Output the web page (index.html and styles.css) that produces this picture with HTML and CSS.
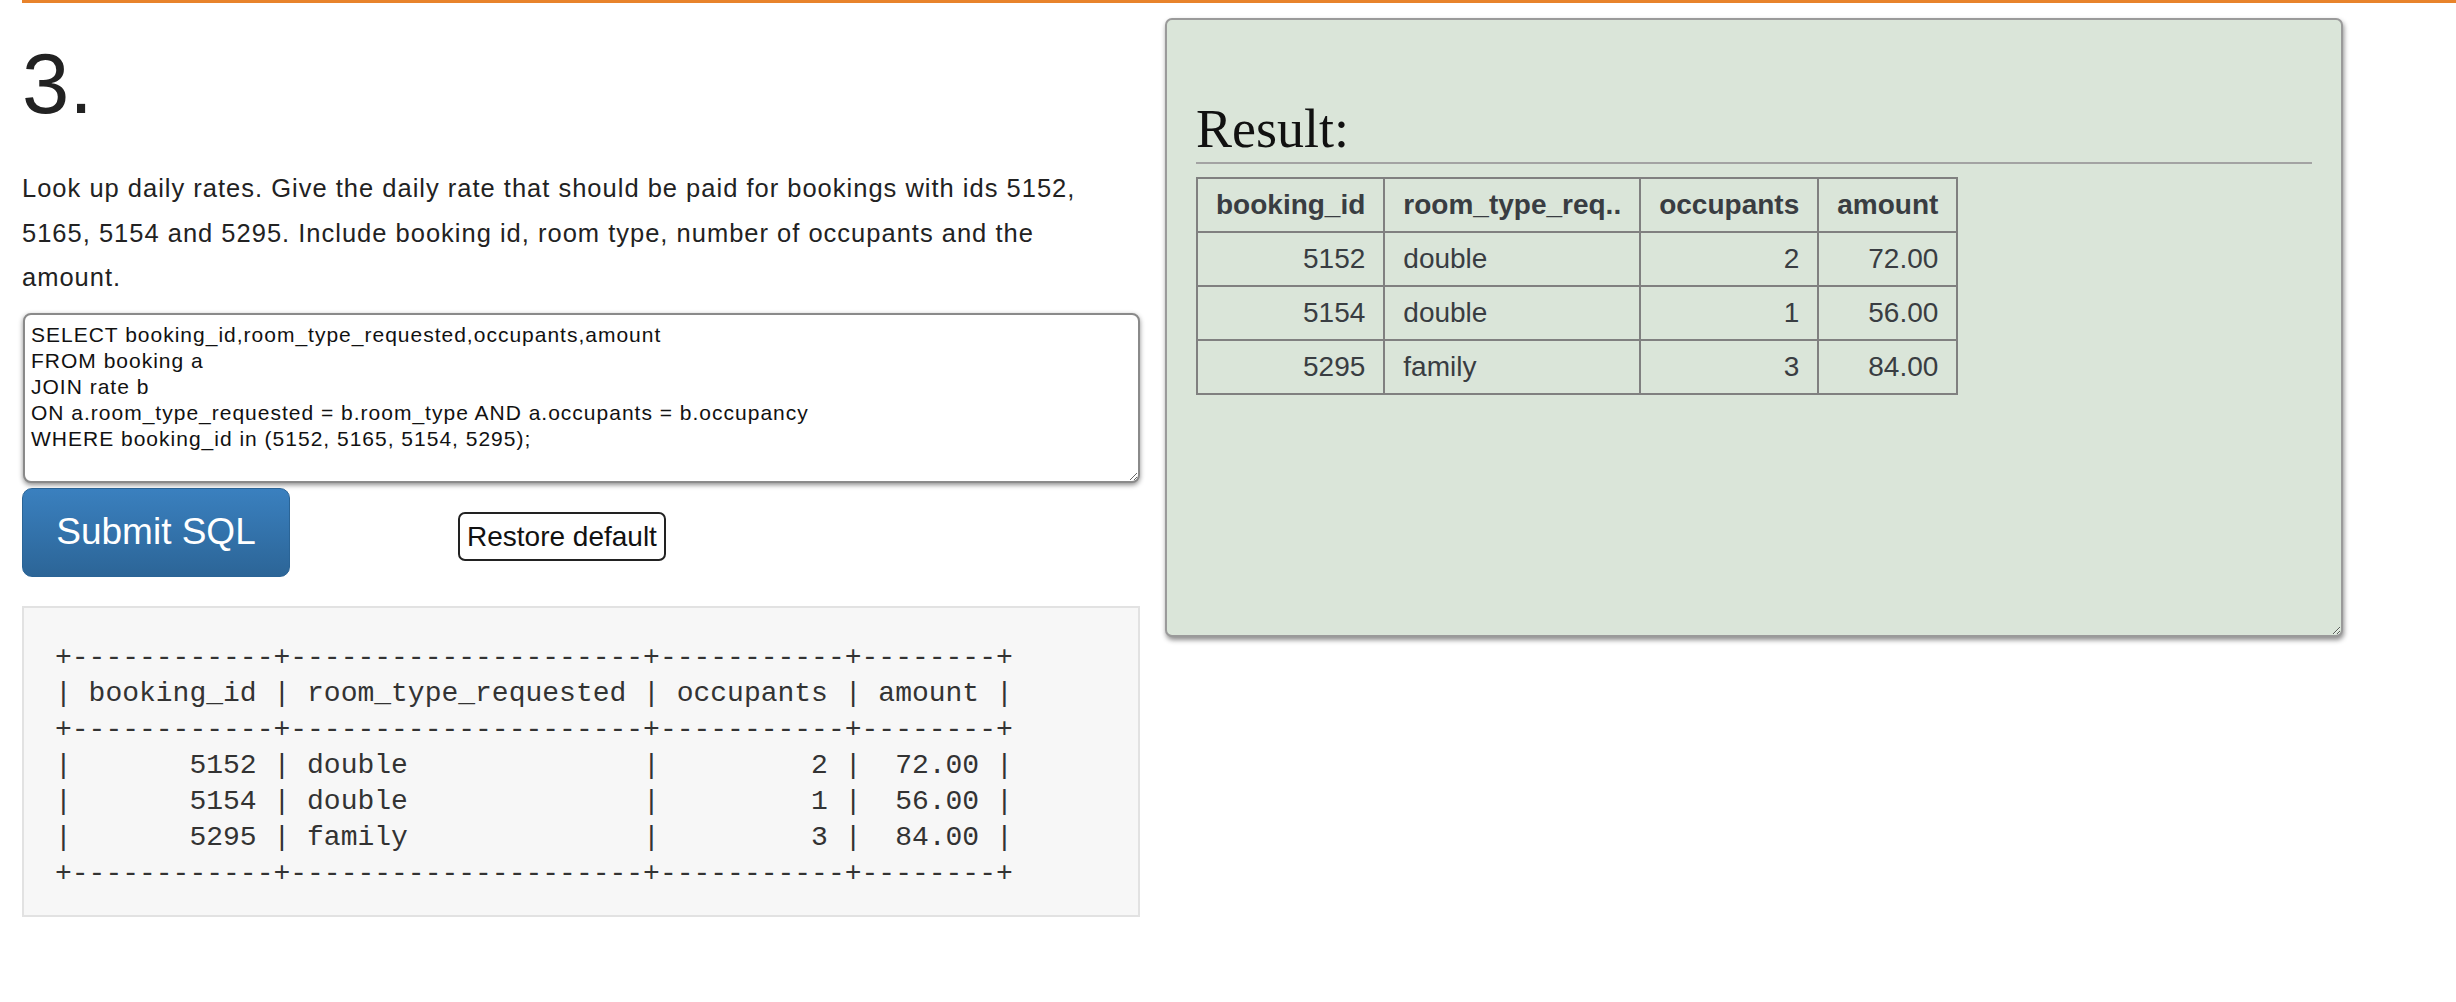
FILE: index.html
```html
<!DOCTYPE html>
<html>
<head>
<meta charset="utf-8">
<title>Question 3</title>
<link rel="stylesheet" href="styles.css">
</head>
<body>
<div class="page">
  <div class="left">
    <h1 class="qnum">3.</h1>
    <p class="question">Look up daily rates. Give the daily rate that should be paid for bookings with ids 5152, 5165, 5154 and 5295. Include booking id, room type, number of occupants and the amount.</p>
    <textarea class="sql" spellcheck="false">SELECT booking_id,room_type_requested,occupants,amount
FROM booking a
JOIN rate b
ON a.room_type_requested = b.room_type AND a.occupants = b.occupancy
WHERE booking_id in (5152, 5165, 5154, 5295);</textarea>
    <div class="actions">
      <button class="btn-submit">Submit SQL</button>
      <button class="btn-restore">Restore default</button>
    </div>
    <pre class="ascii">+------------+---------------------+-----------+--------+
| booking_id | room_type_requested | occupants | amount |
+------------+---------------------+-----------+--------+
|       5152 | double              |         2 |  72.00 |
|       5154 | double              |         1 |  56.00 |
|       5295 | family              |         3 |  84.00 |
+------------+---------------------+-----------+--------+</pre>
  </div>
  <div class="right">
    <div class="result">
      <h2 class="result-title">Result:</h2>
      <hr class="rule">
      <table class="res-table">
        <thead>
          <tr><th>booking_id</th><th>room_type_req..</th><th>occupants</th><th>amount</th></tr>
        </thead>
        <tbody>
          <tr><td class="num">5152</td><td>double</td><td class="num">2</td><td class="num">72.00</td></tr>
          <tr><td class="num">5154</td><td>double</td><td class="num">1</td><td class="num">56.00</td></tr>
          <tr><td class="num">5295</td><td>family</td><td class="num">3</td><td class="num">84.00</td></tr>
        </tbody>
      </table>
    </div>
  </div>
</div>
</body>
</html>
```

FILE: styles.css
```css
html, body {
  margin: 0;
  padding: 0;
  background: #ffffff;
}

body {
  font-family: "Liberation Sans", Arial, sans-serif;
  color: #222;
}

.page {
  margin-left: 22px;
  border-top: 3px solid #e8832b;
  display: flex;
  align-items: flex-start;
}

.left {
  width: 1118px;
  flex: none;
}

.qnum {
  margin: 38px 0 0 0;
  font-size: 85px;
  line-height: 85px;
  font-weight: normal;
  color: #222;
}

.question {
  margin: 40px 0 0 0;
  font-size: 25.5px;
  line-height: 44.5px;
  letter-spacing: 1px;
  color: #222;
}

.sql {
  display: block;
  box-sizing: border-box;
  width: 1117px;
  height: 170px;
  margin: 13px 0 0 1px;
  padding: 7px 6px;
  border: 2px solid #8a8a8a;
  border-radius: 8px;
  box-shadow: 0 2px 5px rgba(0, 0, 0, 0.45);
  font-family: "Liberation Sans", Arial, sans-serif;
  font-size: 21px;
  line-height: 26px;
  letter-spacing: 1px;
  color: #111;
  background: #fff;
  resize: both;
  outline: none;
}

.actions {
  display: flex;
  align-items: flex-start;
  margin-top: 5px;
}

.btn-submit {
  box-sizing: border-box;
  width: 268px;
  height: 89px;
  border: 1px solid #2a6496;
  border-radius: 10px;
  background: linear-gradient(#3a80bf, #2c6597);
  color: #fff;
  font-family: "Liberation Sans", Arial, sans-serif;
  font-size: 37px;
  padding: 0;
  cursor: pointer;
}

.btn-restore {
  box-sizing: border-box;
  height: 49px;
  margin: 24px 0 0 168px;
  padding: 0 7px;
  border: 2px solid #222;
  border-radius: 7px;
  background: #fff;
  color: #111;
  font-family: "Liberation Sans", Arial, sans-serif;
  font-size: 28px;
  line-height: 33px;
  cursor: pointer;
}

.ascii {
  box-sizing: border-box;
  width: 1118px;
  height: 311px;
  margin: 29px 0 0 0;
  padding: 32px 31px 25px;
  background: #f7f7f7;
  border: 2px solid #e2e2e2;
  font-family: "Liberation Mono", "Courier New", monospace;
  font-size: 28px;
  line-height: 36px;
  color: #333;
  overflow: hidden;
}

.right {
  flex: none;
  margin-left: 25px;
  padding-top: 15px;
}

.result {
  box-sizing: border-box;
  width: 1178px;
  height: 619px;
  padding: 0 29px;
  background: #dae5d9;
  border: 2px solid #9a9a9a;
  border-radius: 7px;
  box-shadow: 1px 3px 5px rgba(0, 0, 0, 0.45);
  resize: both;
  overflow: auto;
}

.result-title {
  margin: 82px 0 0 0;
  font-family: "Liberation Serif", "Times New Roman", serif;
  font-size: 54px;
  line-height: 54px;
  font-weight: normal;
  color: #111;
}

.rule {
  margin: 6px 0 0 0;
  border: 0;
  height: 2px;
  background: #a3a3a3;
}

.res-table {
  margin-top: 13px;
  border-collapse: collapse;
  font-family: "Liberation Sans", Arial, sans-serif;
  font-size: 28px;
  line-height: 32px;
  color: #393d42;
}

.res-table th,
.res-table td {
  border: 2px solid #808080;
  padding: 10px 18px;
  text-align: left;
  white-space: nowrap;
}

.res-table th {
  font-weight: bold;
}

.res-table td.num {
  text-align: right;
}
```
